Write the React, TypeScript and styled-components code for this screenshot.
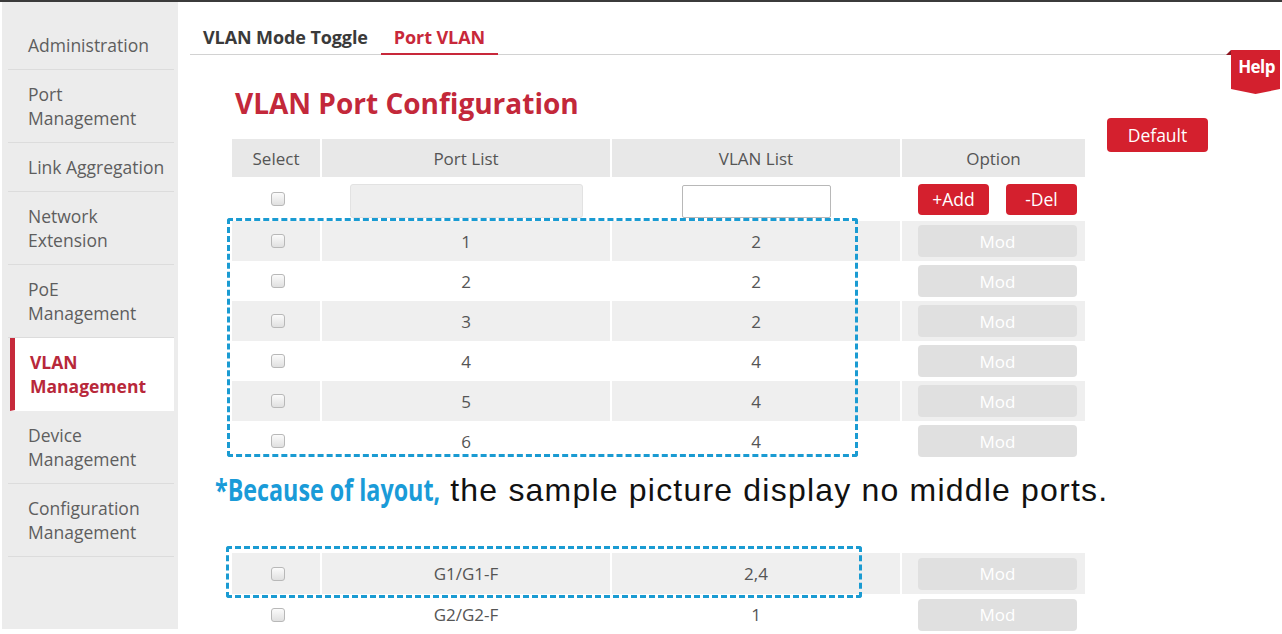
import React from "react";
import styled, { createGlobalStyle, css } from "styled-components";

const GlobalStyle = createGlobalStyle`
  html, body { margin: 0; padding: 0; background: #ffffff; }
  body { font-family: "Open Sans", "Noto Sans", Arial, sans-serif; color: #555; overflow: hidden; }
  * { box-sizing: border-box; }
`;

const Page = styled.div`
  display: flex;
  width: 1282px;
  height: 634px;
  border-top: 2px solid #3b3b3b;
  overflow: hidden;
`;

const Sidebar = styled.nav`
  width: 176px;
  margin-left: 2px;
  height: 627px;
  background: #ececec;
  padding: 19px 4px 0 6px;
  flex-shrink: 0;
`;

const NavItem = styled.div<{ $active?: boolean }>`
  padding: 12px 0 12px 20px;
  line-height: 24px;
  font-size: 17.5px;
  color: #5e5e5e;
  border-bottom: 1px solid #dcdcdc;
  ${(p) =>
    p.$active &&
    css`
      background: #ffffff;
      color: #b8283a;
      font-weight: 700;
      border-left: 5px solid #c62a3b;
      padding-left: 15px;
      border-bottom-color: transparent;
      margin-left: 2px;
    `}
`;

const Main = styled.main`
  position: relative;
  flex: 1;
  padding-left: 12px;
`;

const TabBar = styled.div`
  display: flex;
  margin-top: 20px;
  margin-right: 54px;
  height: 33px;
  border-bottom: 1px solid #d2d2d2;
`;

const Tab = styled.div<{ $active?: boolean }>`
  padding: 0 13px;
  height: 33px;
  line-height: 30px;
  font-size: 18px;
  font-weight: 700;
  letter-spacing: -0.1px;
  color: ${(p) => (p.$active ? "#c8283a" : "#3a3a3a")};
  border-bottom: 2px solid ${(p) => (p.$active ? "#c8283a" : "transparent")};
  margin-bottom: -1px;
`;

const HelpBadge = styled.div`
  position: absolute;
  top: 44px;
  right: 0;
  width: 56px;
  height: 50px;
`;

const HelpText = styled.span`
  position: absolute;
  left: 5px;
  right: 0;
  top: 9px;
  text-align: center;
  color: #fff;
  font-weight: 700;
  font-size: 17px;
  letter-spacing: -0.6px;
  font-family: "Open Sans", Arial, sans-serif;
`;

const Body = styled.div`
  display: flex;
  align-items: flex-start;
  padding-left: 42px;
  margin-top: 30px;
`;

const LeftCol = styled.div`
  width: 853px;
`;

const Title = styled.h1`
  margin: 0 0 18px 3px;
  font-size: 28px;
  line-height: 36px;
  font-weight: 700;
  color: #c3283a;
`;

const RightCol = styled.div`
  margin-left: 22px;
  padding-top: 33px;
`;

const RedButton = styled.button<{ $w: number; $h: number }>`
  width: ${(p) => p.$w}px;
  height: ${(p) => p.$h}px;
  background: #d4202e;
  color: #fff;
  border: none;
  border-radius: 4px;
  font-family: "Open Sans", Arial, sans-serif;
  font-size: 17.5px;
  padding: 0;
  cursor: pointer;
`;

const ModButton = styled.button`
  width: 159px;
  height: 32px;
  background: #e0e0e0;
  color: #fff;
  border: none;
  border-radius: 4px;
  font-family: "Open Sans", Arial, sans-serif;
  font-size: 17px;
  padding: 0;
`;

const TableWrap = styled.div`
  position: relative;
`;

const Grid = styled.div`
  display: grid;
  grid-template-columns: 90px 290px 290px 183px;
`;

const Row = styled.div<{ $h: number; $shade?: "head" | "gray" | "white" }>`
  display: contents;
  & > div {
    height: ${(p) => p.$h}px;
    background: ${(p) =>
      p.$shade === "head" ? "#e8e8e8" : p.$shade === "gray" ? "#efefef" : "#ffffff"};
  }
`;

const Cell = styled.div`
  display: flex;
  align-items: center;
  justify-content: center;
  font-size: 17px;
  color: #555;
  border-right: 2px solid #ffffff;
  &:last-child { border-right: none; }
`;

const OptionCell = styled(Cell)`
  justify-content: flex-start;
  padding-left: 16px;
  gap: 17px;
`;

const Check = styled.span`
  width: 14px;
  height: 14px;
  border: 1px solid #b8b8b8;
  border-radius: 3px;
  background: linear-gradient(#fbfbfb, #e0e0e0);
  margin-left: 4px;
`;

const PortInput = styled.div`
  width: 233px;
  height: 34px;
  background: #eeeeee;
  border: 1px solid #e2e2e2;
  border-radius: 3px;
  margin-top: 4px;
`;

const VlanInput = styled.div`
  width: 149px;
  height: 33px;
  background: #fff;
  border: 1px solid #b8b8b8;
  border-radius: 2px;
  margin-top: 4px;
`;

const Highlight = styled.div<{ $top: number; $left: number; $w: number; $h: number }>`
  position: absolute;
  top: ${(p) => p.$top}px;
  left: ${(p) => p.$left}px;
  width: ${(p) => p.$w}px;
  height: ${(p) => p.$h}px;
  border: 3px dashed #1a9bd2;
  border-radius: 3px;
  pointer-events: none;
`;

const Note = styled.p`
  margin: 0 0 0 -17px;
  height: 92px;
  padding-top: 11px;
  line-height: 36px;
  white-space: nowrap;
`;

const NoteStrong = styled.span`
  display: inline-block;
  font-family: "Open Sans", Arial, sans-serif;
  font-weight: 700;
  font-size: 30px;
  color: #1a9bd8;
  transform: scaleX(0.776);
  transform-origin: left center;
  margin-right: -65px;
`;

const NotePlain = styled.span`
  font-family: "Liberation Sans", Arial, sans-serif;
  font-size: 32px;
  letter-spacing: 1.2px;
  color: #111;
`;

const navItems = [
  { label: ["Administration"] },
  { label: ["Port", "Management"] },
  { label: ["Link Aggregation"] },
  { label: ["Network", "Extension"] },
  { label: ["PoE", "Management"] },
  { label: ["VLAN", "Management"], active: true },
  { label: ["Device", "Management"] },
  { label: ["Configuration", "Management"] },
];

const topRows = [
  ["1", "2"],
  ["2", "2"],
  ["3", "2"],
  ["4", "4"],
  ["5", "4"],
  ["6", "4"],
];

const bottomRows = [
  ["G1/G1-F", "2,4"],
  ["G2/G2-F", "1"],
];

function DataRow({ port, vlan, gray, h }: { port: string; vlan: string; gray: boolean; h: number }) {
  return (
    <Row $h={h} $shade={gray ? "gray" : "white"}>
      <Cell><Check /></Cell>
      <Cell>{port}</Cell>
      <Cell>{vlan}</Cell>
      <OptionCell><ModButton>Mod</ModButton></OptionCell>
    </Row>
  );
}

export default function App() {
  return (
    <>
      <GlobalStyle />
      <Page>
        <Sidebar>
          {navItems.map((n) => (
            <NavItem key={n.label.join(" ")} $active={n.active}>
              {n.label.map((l) => (
                <div key={l}>{l}</div>
              ))}
            </NavItem>
          ))}
        </Sidebar>
        <Main>
          <TabBar>
            <Tab>VLAN Mode Toggle</Tab>
            <Tab $active>Port VLAN</Tab>
          </TabBar>
          <HelpBadge>
            <svg width="56" height="50" viewBox="0 0 56 50">
              <path d="M0 9 L5 4 L5 9 Z" fill="#8e1620" />
              <path d="M5 4 L54 4 L54 43 L29.5 48 L5 43 Z" fill="#d3202e" />
            </svg>
            <HelpText>Help</HelpText>
          </HelpBadge>
          <Body>
            <LeftCol>
              <Title>VLAN Port Configuration</Title>
              <TableWrap>
                <Grid>
                  <Row $h={38} $shade="head">
                    <Cell>Select</Cell>
                    <Cell>Port List</Cell>
                    <Cell>VLAN List</Cell>
                    <Cell>Option</Cell>
                  </Row>
                  <Row $h={44} $shade="white">
                    <Cell><Check /></Cell>
                    <Cell><PortInput /></Cell>
                    <Cell><VlanInput /></Cell>
                    <OptionCell>
                      <RedButton $w={71} $h={31}>+Add</RedButton>
                      <RedButton $w={71} $h={31}>-Del</RedButton>
                    </OptionCell>
                  </Row>
                  {topRows.map(([p, v], i) => (
                    <DataRow key={p} port={p} vlan={v} gray={i % 2 === 0} h={40} />
                  ))}
                </Grid>
                <Highlight $top={79} $left={-5} $w={631} $h={239} />
              </TableWrap>
              <Note>
                <NoteStrong>*Because of layout,</NoteStrong>
                <NotePlain> the sample picture display no middle ports.</NotePlain>
              </Note>
              <TableWrap>
                <Grid>
                  {bottomRows.map(([p, v], i) => (
                    <DataRow key={p} port={p} vlan={v} gray={i % 2 === 0} h={41} />
                  ))}
                </Grid>
                <Highlight $top={-7} $left={-6} $w={636} $h={52} />
              </TableWrap>
            </LeftCol>
            <RightCol>
              <RedButton $w={101} $h={34}>Default</RedButton>
            </RightCol>
          </Body>
        </Main>
      </Page>
    </>
  );
}
